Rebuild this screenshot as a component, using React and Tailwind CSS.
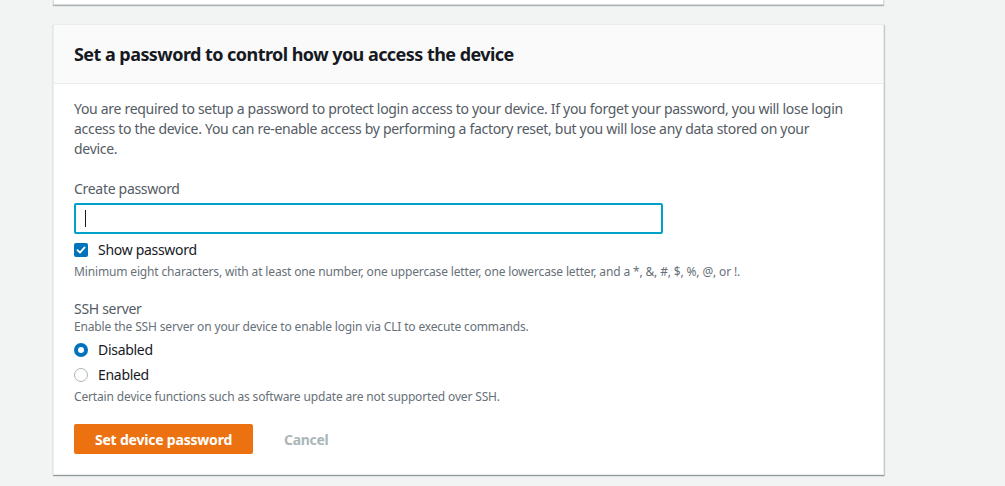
import React, { useState } from 'react'

const font = { fontFamily: '"Noto Sans", "Open Sans", Arial, sans-serif' }

const App = () => {
  const [showPassword, setShowPassword] = useState(true)
  const [ssh, setSsh] = useState('disabled')

  return (
    <div className="min-h-screen bg-[#f2f3f3] pl-[53px] w-[1005px]" style={font}>
      {/* previous card edge */}
      <div className="w-[831px] h-[5px] bg-white border-b border-x border-[#d5dbdb] shadow-[0_1px_1px_0_rgba(0,28,36,0.3)]" />

      {/* Main card */}
      <div className="mt-[19px] w-[831px] bg-white border border-[#eaeded] shadow-[0_1px_1px_0_rgba(0,28,36,0.3),1px_1px_1px_0_rgba(0,28,36,0.15)]">
        <div className="bg-[#fafafa] border-b border-[#eaeded] h-[59px] flex items-center px-5">
          <h2 className="text-[18px] font-bold text-[#16191f] tracking-[-0.55px]">
            Set a password to control how you access the device
          </h2>
        </div>

        <div className="px-5 pt-[15px] pb-[20px] tracking-[-0.3px]">
          <p className="w-[775px] text-[14px] leading-[20px] text-[#545b64]">
            You are required to setup a password to protect login access to your device. If you forget your password, you will lose login access to the device. You can re-enable access by performing a factory reset, but you will lose any data stored on your device.
          </p>

          <div className="mt-[20px]">
            <label className="block text-[14px] leading-[20px] text-[#545b64]">Create password</label>
            <div className="mt-[4px] w-[589px] h-[31px] rounded-[2px] border-2 border-[#00a1c9] flex items-center px-[9px]">
              <span className="w-px h-[17px] bg-[#16191f]" />
            </div>
            <label className="mt-[6px] flex items-center gap-[10px] cursor-pointer" onClick={() => setShowPassword(!showPassword)}>
              <span className={`w-[14px] h-[14px] rounded-[2px] flex items-center justify-center ${showPassword ? 'bg-[#0073bb]' : 'border border-[#aab7b8]'}`}>
                {showPassword && (
                  <svg width="10" height="10" viewBox="0 0 10 10" fill="none">
                    <path d="M1.5 5.2 L4 7.6 L8.6 2.4" stroke="white" strokeWidth="1.8" strokeLinecap="round" strokeLinejoin="round" />
                  </svg>
                )}
              </span>
              <span className="text-[14px] leading-[20px] text-[#16191f]">Show password</span>
            </label>
            <p className="mt-[4px] text-[12px] leading-[16px] text-[#687078] tracking-[-0.15px]">
              Minimum eight characters, with at least one number, one uppercase letter, one lowercase letter, and a *, &amp;, #, $, %, @, or !.
            </p>
          </div>

          <div className="mt-[19px]">
            <div className="text-[14px] leading-[20px] text-[#545b64]">SSH server</div>
            <p className="text-[12px] leading-[16px] text-[#687078] tracking-[-0.15px]">
              Enable the SSH server on your device to enable login via CLI to execute commands.
            </p>
            <div className="mt-[5px] flex flex-col gap-[5px]">
              {[
                { value: 'disabled', label: 'Disabled' },
                { value: 'enabled', label: 'Enabled' }
              ].map(opt => (
                <label key={opt.value} className="flex items-center gap-[10px] cursor-pointer" onClick={() => setSsh(opt.value)}>
                  <span className={`w-[14px] h-[14px] rounded-full ${ssh === opt.value ? 'border-[4px] border-[#0073bb]' : 'border border-[#aab7b8]'} bg-white`} />
                  <span className="text-[14px] leading-[20px] text-[#16191f]">{opt.label}</span>
                </label>
              ))}
            </div>
            <p className="mt-[4px] text-[12px] leading-[16px] text-[#687078] tracking-[-0.15px]">
              Certain device functions such as software update are not supported over SSH.
            </p>
          </div>

          <div className="mt-[19px] flex items-center gap-[31px]">
            <button className="h-[30px] w-[179px] rounded-[2px] bg-[#ec7211] text-white text-[14px] font-bold tracking-[-0.2px]">
              Set device password
            </button>
            <button className="text-[14px] font-bold text-[#aab7b8]">Cancel</button>
          </div>
        </div>
      </div>
    </div>
  )
}

export default App
